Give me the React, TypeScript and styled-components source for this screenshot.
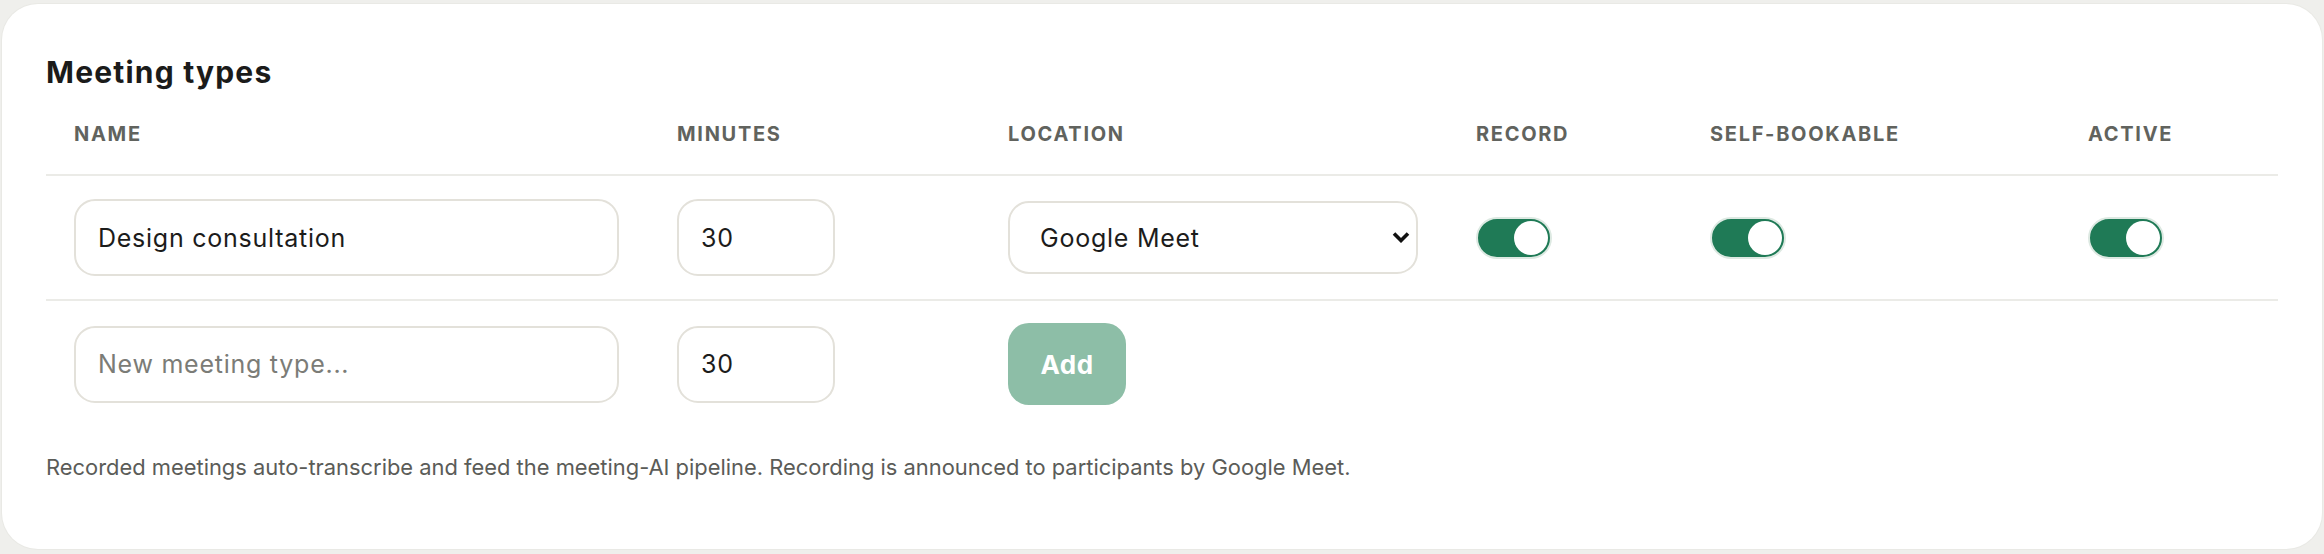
import * as React from 'react';
import styled, { createGlobalStyle } from 'styled-components';

const GlobalStyle = createGlobalStyle`
  html, body {
    margin: 0;
    padding: 0;
    background: #efefec;
    font-family: Inter, "Noto Sans", sans-serif;
  }
  * {
    box-sizing: border-box;
  }
`;

const Page = styled.div`
  padding: 4px 2px 5px 2px;
`;

const Card = styled.section`
  background: #ffffff;
  border-radius: 36px;
  padding: 50px 44px 66px 44px;
  box-shadow: 0 0 0 1px #e9e9e5;
`;

const Title = styled.h2`
  margin: 0 0 32px 0;
  font-size: 30px;
  line-height: 36px;
  font-weight: 700;
  color: #1b1b1a;
  letter-spacing: 0.04em;
`;

const Grid = styled.div`
  display: grid;
  grid-template-columns: 603px 331px 468px 234px 378px 218px;
`;

const HeadCell = styled.div`
  padding: 0 28px 28px 28px;
  font-size: 20px;
  line-height: 24px;
  font-weight: 700;
  letter-spacing: 0.085em;
  color: #61635e;
  text-transform: uppercase;
  border-bottom: 2px solid #ebebe7;
`;

const Cell = styled.div<{ $last?: boolean }>`
  display: flex;
  align-items: center;
  padding: ${(p) => (p.$last ? '22px 30px 22px 28px' : '23px 30px 23px 28px')};
  border-bottom: ${(p) => (p.$last ? 'none' : '2px solid #ebebe7')};
`;

const TextInput = styled.input<{ $width?: number }>`
  width: ${(p) => (p.$width ? `${p.$width}px` : '100%')};
  height: 77px;
  padding: 0 22px;
  border: 2px solid #e3e1da;
  border-radius: 21px;
  background: #ffffff;
  font-family: Inter, "Noto Sans", sans-serif;
  font-size: 25px;
  letter-spacing: 0.03em;
  color: #1c1c1b;
  outline: none;
  &::placeholder {
    color: #7b7c77;
  }
`;

const SelectWrap = styled.div`
  position: relative;
  width: 100%;
`;

const Select = styled.select`
  appearance: none;
  width: 100%;
  height: 73px;
  padding: 0 60px 0 30px;
  border: 2px solid #e3e1da;
  border-radius: 21px;
  background: #ffffff;
  font-family: Inter, "Noto Sans", sans-serif;
  font-size: 25px;
  letter-spacing: 0.03em;
  color: #1c1c1b;
  outline: none;
`;

const Chevron = styled.svg`
  position: absolute;
  right: 8px;
  top: 50%;
  margin-top: -7px;
  width: 18px;
  height: 12px;
  pointer-events: none;
`;

const Switch = styled.button<{ $on: boolean }>`
  display: flex;
  justify-content: ${(p) => (p.$on ? 'flex-end' : 'flex-start')};
  align-items: center;
  width: 76px;
  height: 42px;
  padding: 2px;
  border: 2px solid ${(p) => (p.$on ? '#dde9e2' : '#e3e1da')};
  border-radius: 21px;
  background: ${(p) => (p.$on ? '#1f7a56' : '#d8d7d2')};
  cursor: pointer;
`;

const Knob = styled.span`
  width: 34px;
  height: 34px;
  border-radius: 50%;
  background: #ffffff;
`;

const AddButton = styled.button`
  width: 118px;
  height: 82px;
  border: none;
  border-radius: 21px;
  background: #8dbea7;
  color: #ffffff;
  font-family: Inter, "Noto Sans", sans-serif;
  font-size: 26px;
  font-weight: 700;
  letter-spacing: 0.02em;
  cursor: pointer;
`;

const Note = styled.p`
  margin: 25px 0 0 0;
  font-size: 21.9px;
  line-height: 31px;
  color: #5b5c58;
`;

interface MeetingType {
  name: string;
  minutes: number;
  location: string;
  record: boolean;
  selfBookable: boolean;
  active: boolean;
}

const initial: MeetingType[] = [
  {
    name: 'Design consultation',
    minutes: 30,
    location: 'Google Meet',
    record: true,
    selfBookable: true,
    active: true,
  },
];

function Toggle(props: { on: boolean; onChange: () => void }) {
  return (
    <Switch type="button" role="switch" aria-checked={props.on} $on={props.on} onClick={props.onChange}>
      <Knob />
    </Switch>
  );
}

export default function App() {
  const [types, setTypes] = React.useState<MeetingType[]>(initial);
  const [draftName, setDraftName] = React.useState('');
  const [draftMinutes, setDraftMinutes] = React.useState('30');

  const flip = (i: number, key: 'record' | 'selfBookable' | 'active') => {
    setTypes((prev) => prev.map((t, j) => (j === i ? { ...t, [key]: !t[key] } : t)));
  };

  return (
    <Page>
      <GlobalStyle />
      <Card>
        <Title>Meeting types</Title>
        <Grid>
          <HeadCell>Name</HeadCell>
          <HeadCell>Minutes</HeadCell>
          <HeadCell>Location</HeadCell>
          <HeadCell>Record</HeadCell>
          <HeadCell>Self-bookable</HeadCell>
          <HeadCell>Active</HeadCell>

          {types.map((t, i) => (
            <React.Fragment key={i}>
              <Cell>
                <TextInput defaultValue={t.name} />
              </Cell>
              <Cell>
                <TextInput $width={158} defaultValue={String(t.minutes)} />
              </Cell>
              <Cell>
                <SelectWrap>
                  <Select defaultValue={t.location}>
                    <option>Google Meet</option>
                    <option>Zoom</option>
                    <option>Phone</option>
                    <option>In person</option>
                  </Select>
                  <Chevron viewBox="0 0 18 12">
                    <path d="M2 2.5 L9 9.5 L16 2.5" fill="none" stroke="#111" strokeWidth="3.6" />
                  </Chevron>
                </SelectWrap>
              </Cell>
              <Cell>
                <Toggle on={t.record} onChange={() => flip(i, 'record')} />
              </Cell>
              <Cell>
                <Toggle on={t.selfBookable} onChange={() => flip(i, 'selfBookable')} />
              </Cell>
              <Cell>
                <Toggle on={t.active} onChange={() => flip(i, 'active')} />
              </Cell>
            </React.Fragment>
          ))}

          <Cell $last>
            <TextInput
              placeholder="New meeting type..."
              value={draftName}
              onChange={(e) => setDraftName(e.target.value)}
            />
          </Cell>
          <Cell $last>
            <TextInput $width={158} value={draftMinutes} onChange={(e) => setDraftMinutes(e.target.value)} />
          </Cell>
          <Cell $last>
            <AddButton type="button" disabled={!draftName}>
              Add
            </AddButton>
          </Cell>
          <Cell $last />
          <Cell $last />
          <Cell $last />
        </Grid>
        <Note>
          Recorded meetings auto-transcribe and feed the meeting-AI pipeline. Recording is announced to
          participants by Google Meet.
        </Note>
      </Card>
    </Page>
  );
}
